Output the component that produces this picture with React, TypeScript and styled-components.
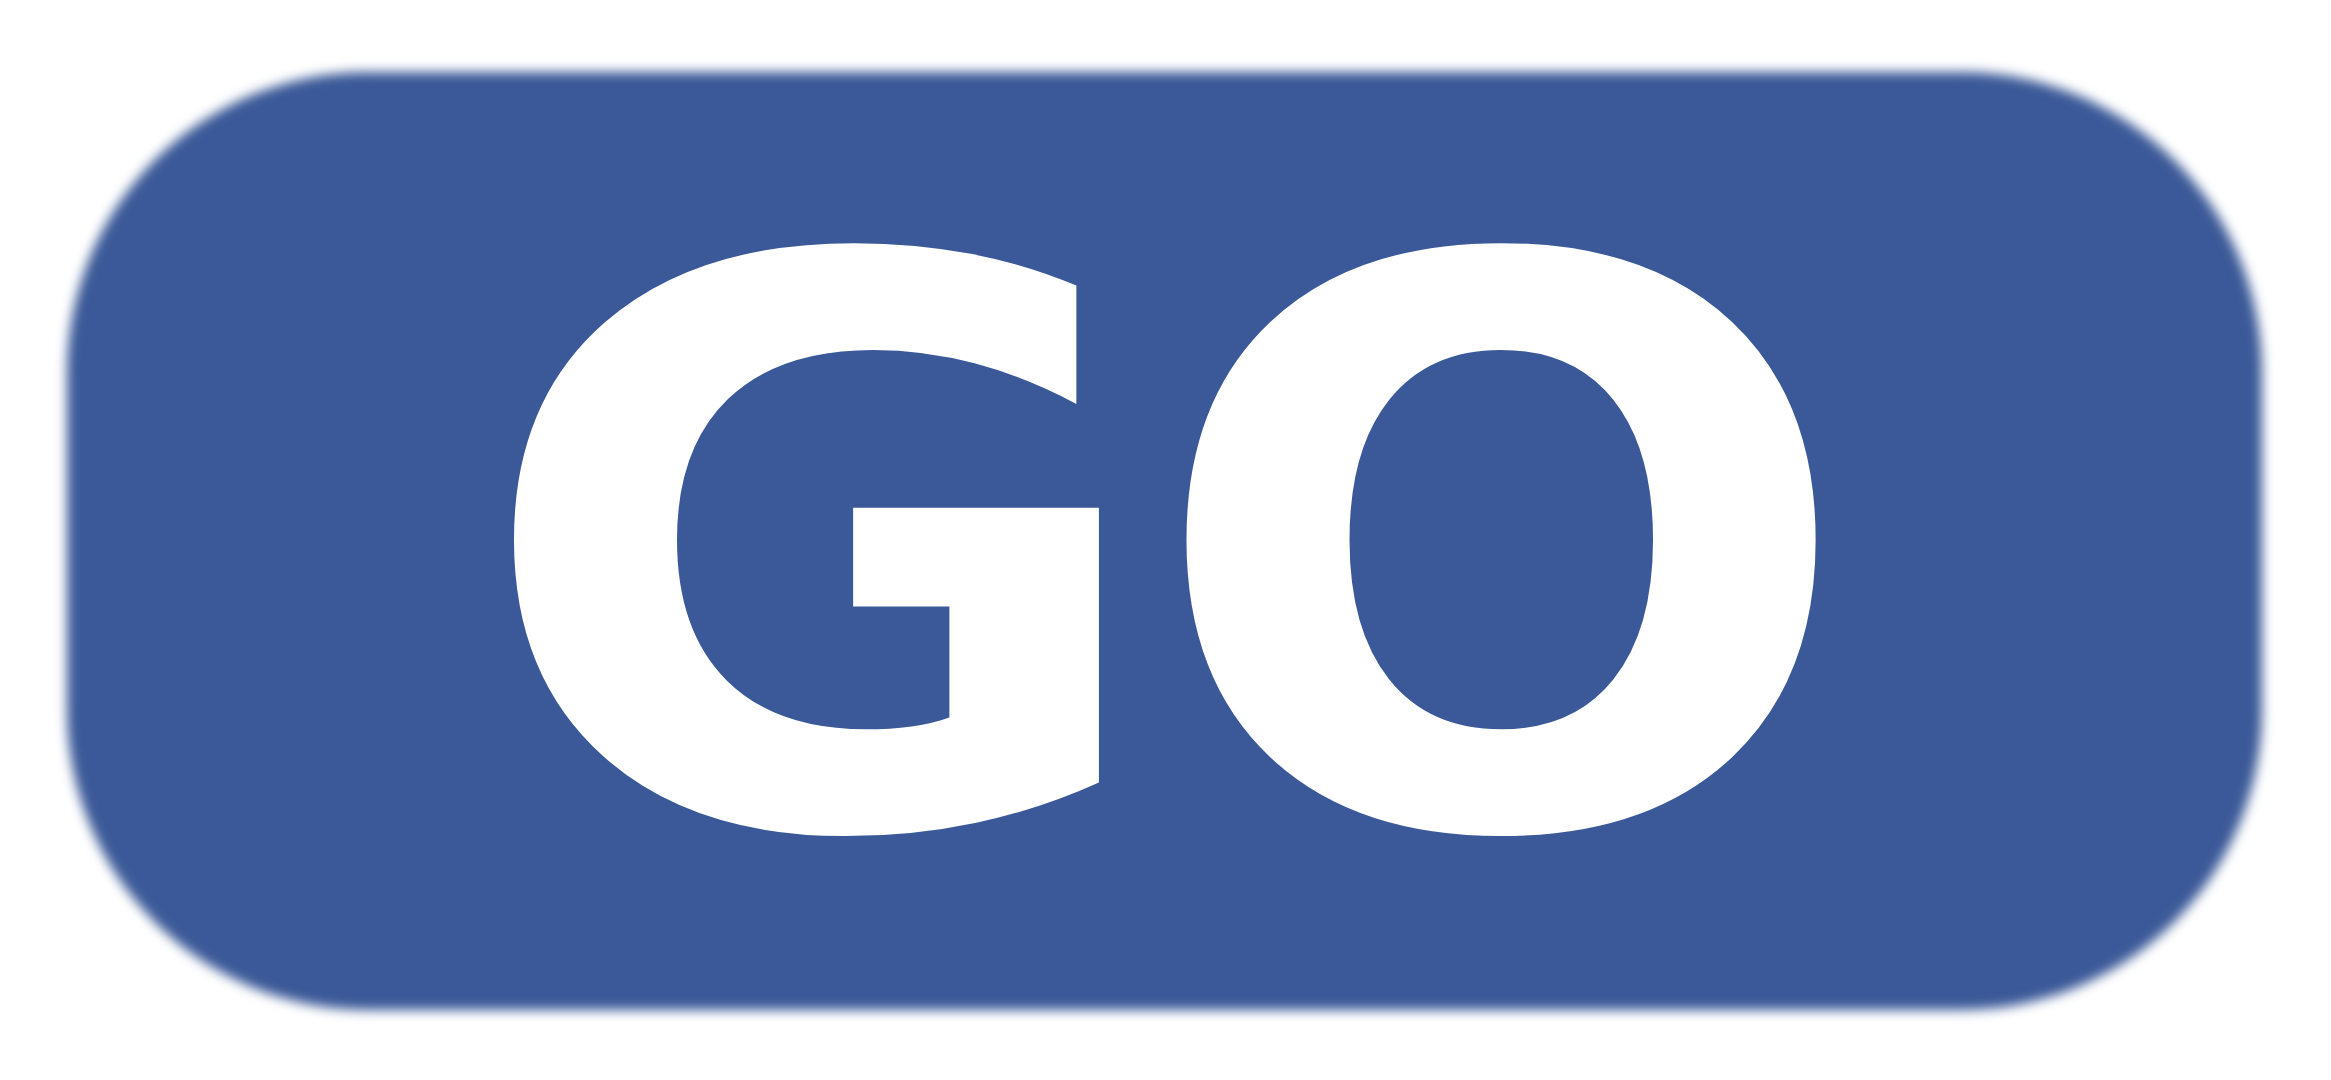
import React from 'react';
import styled, { createGlobalStyle } from 'styled-components';

const GlobalStyle = createGlobalStyle`
  html, body {
    margin: 0;
    padding: 0;
    background: #ffffff;
  }
  #root {
    width: 2331px;
    height: 1080px;
  }
`;

const Page = styled.div`
  width: 2331px;
  height: 1080px;
  box-sizing: border-box;
  padding: 72px 69px 70px 67px;
  display: flex;
`;

const Badge = styled.div`
  position: relative;
  flex: 1;
  display: flex;
  align-items: center;
  justify-content: center;

  &::before {
    content: '';
    position: absolute;
    inset: 0;
    background: #3b5998;
    border-radius: 300px;
    filter: blur(6px);
    z-index: 0;
  }
`;

const Label = styled.span`
  position: relative;
  z-index: 1;
  display: inline-block;
  color: #ffffff;
  font-family: 'DejaVu Sans', 'Liberation Sans', sans-serif;
  font-weight: 700;
  font-size: 784px;
  line-height: 1;
  letter-spacing: -15px;
  margin: 26px 0 0 -15px;
  transform: scaleX(1.07);
`;

export default function App() {
  return (
    <>
      <GlobalStyle />
      <Page>
        <Badge>
          <Label>GO</Label>
        </Badge>
      </Page>
    </>
  );
}
